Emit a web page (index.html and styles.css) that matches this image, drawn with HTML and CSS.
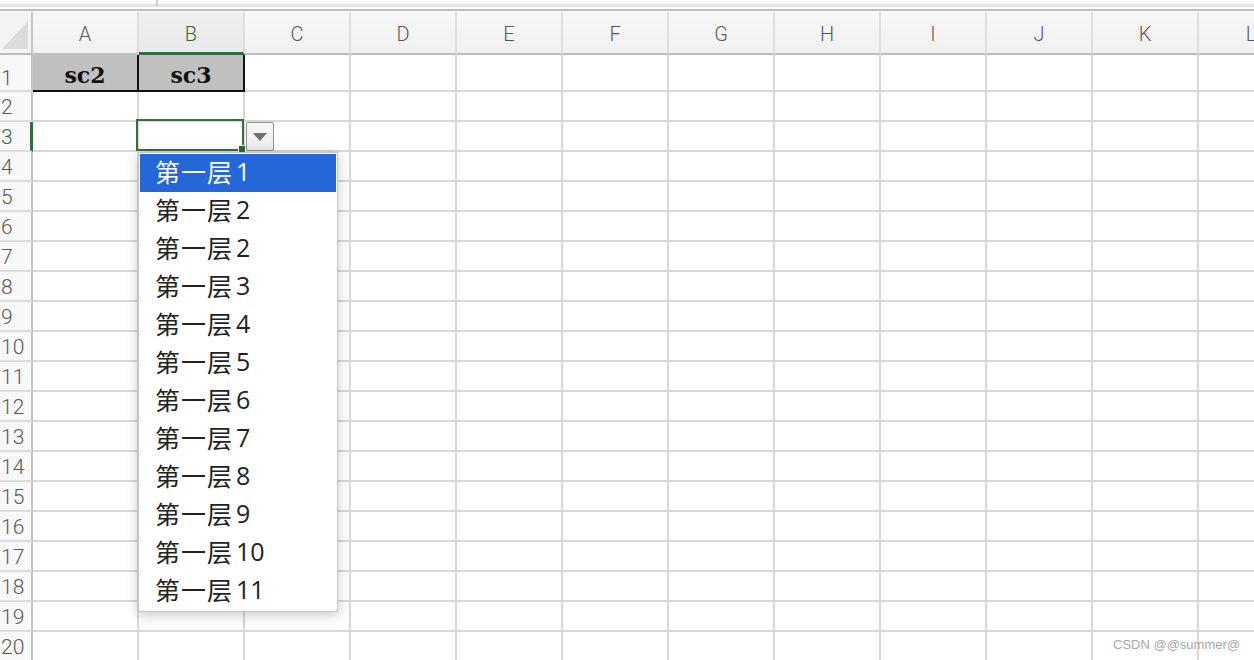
FILE: index.html
```html
<!DOCTYPE html>
<html>
<head>
<meta charset="utf-8">
<link rel="stylesheet" href="styles.css">
</head>
<body>
<div class="topbar"><span class="tick"></span></div>
<div class="sheet">
  <div class="row hdr">
    <div class="corner"><svg width="32" height="41" viewBox="0 0 32 41"><polygon points="2,37 28,9 28,37" fill="#dcdcdc"/></svg></div>
    <div class="ch">A</div><div class="ch sel">B</div><div class="ch">C</div><div class="ch">D</div><div class="ch">E</div><div class="ch">F</div><div class="ch">G</div><div class="ch">H</div><div class="ch">I</div><div class="ch">J</div><div class="ch">K</div><div class="ch">L</div>
  </div>
  <div class="row r1">
    <div class="rh">1</div>
    <div class="c hd">sc2</div><div class="c hd">sc3</div><div class="c"></div><div class="c"></div><div class="c"></div><div class="c"></div><div class="c"></div><div class="c"></div><div class="c"></div><div class="c"></div><div class="c"></div><div class="c"></div>
  </div>
  <div class="row"><div class="rh">2</div><div class="c"></div><div class="c"></div><div class="c"></div><div class="c"></div><div class="c"></div><div class="c"></div><div class="c"></div><div class="c"></div><div class="c"></div><div class="c"></div><div class="c"></div><div class="c"></div></div>
  <div class="row"><div class="rh act">3</div><div class="c"></div><div class="c active"><span class="ddbtn"><svg width="14" height="8" viewBox="0 0 14 8"><polygon points="0,0 14,0 7,8" fill="#6f6f6f"/></svg></span></div><div class="c"></div><div class="c"></div><div class="c"></div><div class="c"></div><div class="c"></div><div class="c"></div><div class="c"></div><div class="c"></div><div class="c"></div><div class="c"></div></div>
  <div class="row"><div class="rh">4</div><div class="c"></div><div class="c"></div><div class="c"></div><div class="c"></div><div class="c"></div><div class="c"></div><div class="c"></div><div class="c"></div><div class="c"></div><div class="c"></div><div class="c"></div><div class="c"></div></div>
  <div class="row"><div class="rh">5</div><div class="c"></div><div class="c"></div><div class="c"></div><div class="c"></div><div class="c"></div><div class="c"></div><div class="c"></div><div class="c"></div><div class="c"></div><div class="c"></div><div class="c"></div><div class="c"></div></div>
  <div class="row"><div class="rh">6</div><div class="c"></div><div class="c"></div><div class="c"></div><div class="c"></div><div class="c"></div><div class="c"></div><div class="c"></div><div class="c"></div><div class="c"></div><div class="c"></div><div class="c"></div><div class="c"></div></div>
  <div class="row"><div class="rh">7</div><div class="c"></div><div class="c"></div><div class="c"></div><div class="c"></div><div class="c"></div><div class="c"></div><div class="c"></div><div class="c"></div><div class="c"></div><div class="c"></div><div class="c"></div><div class="c"></div></div>
  <div class="row"><div class="rh">8</div><div class="c"></div><div class="c"></div><div class="c"></div><div class="c"></div><div class="c"></div><div class="c"></div><div class="c"></div><div class="c"></div><div class="c"></div><div class="c"></div><div class="c"></div><div class="c"></div></div>
  <div class="row"><div class="rh">9</div><div class="c"></div><div class="c"></div><div class="c"></div><div class="c"></div><div class="c"></div><div class="c"></div><div class="c"></div><div class="c"></div><div class="c"></div><div class="c"></div><div class="c"></div><div class="c"></div></div>
  <div class="row"><div class="rh">10</div><div class="c"></div><div class="c"></div><div class="c"></div><div class="c"></div><div class="c"></div><div class="c"></div><div class="c"></div><div class="c"></div><div class="c"></div><div class="c"></div><div class="c"></div><div class="c"></div></div>
  <div class="row"><div class="rh">11</div><div class="c"></div><div class="c"></div><div class="c"></div><div class="c"></div><div class="c"></div><div class="c"></div><div class="c"></div><div class="c"></div><div class="c"></div><div class="c"></div><div class="c"></div><div class="c"></div></div>
  <div class="row"><div class="rh">12</div><div class="c"></div><div class="c"></div><div class="c"></div><div class="c"></div><div class="c"></div><div class="c"></div><div class="c"></div><div class="c"></div><div class="c"></div><div class="c"></div><div class="c"></div><div class="c"></div></div>
  <div class="row"><div class="rh">13</div><div class="c"></div><div class="c"></div><div class="c"></div><div class="c"></div><div class="c"></div><div class="c"></div><div class="c"></div><div class="c"></div><div class="c"></div><div class="c"></div><div class="c"></div><div class="c"></div></div>
  <div class="row"><div class="rh">14</div><div class="c"></div><div class="c"></div><div class="c"></div><div class="c"></div><div class="c"></div><div class="c"></div><div class="c"></div><div class="c"></div><div class="c"></div><div class="c"></div><div class="c"></div><div class="c"></div></div>
  <div class="row"><div class="rh">15</div><div class="c"></div><div class="c"></div><div class="c"></div><div class="c"></div><div class="c"></div><div class="c"></div><div class="c"></div><div class="c"></div><div class="c"></div><div class="c"></div><div class="c"></div><div class="c"></div></div>
  <div class="row"><div class="rh">16</div><div class="c"></div><div class="c"></div><div class="c"></div><div class="c"></div><div class="c"></div><div class="c"></div><div class="c"></div><div class="c"></div><div class="c"></div><div class="c"></div><div class="c"></div><div class="c"></div></div>
  <div class="row"><div class="rh">17</div><div class="c"></div><div class="c"></div><div class="c"></div><div class="c"></div><div class="c"></div><div class="c"></div><div class="c"></div><div class="c"></div><div class="c"></div><div class="c"></div><div class="c"></div><div class="c"></div></div>
  <div class="row"><div class="rh">18</div><div class="c"></div><div class="c"></div><div class="c"></div><div class="c"></div><div class="c"></div><div class="c"></div><div class="c"></div><div class="c"></div><div class="c"></div><div class="c"></div><div class="c"></div><div class="c"></div></div>
  <div class="row"><div class="rh">19</div><div class="c"></div><div class="c"></div><div class="c"></div><div class="c"></div><div class="c"></div><div class="c"></div><div class="c"></div><div class="c"></div><div class="c"></div><div class="c"></div><div class="c"></div><div class="c"></div></div>
  <div class="row"><div class="rh">20</div><div class="c"></div><div class="c"></div><div class="c"></div><div class="c"></div><div class="c"></div><div class="c"></div><div class="c"></div><div class="c"></div><div class="c"></div><div class="c"></div><div class="c"></div><div class="c"></div></div>
</div>

<ul class="popup">
  <li class="on">第一层<span class="n">1</span></li>
  <li>第一层<span class="n">2</span></li>
  <li>第一层<span class="n">2</span></li>
  <li>第一层<span class="n">3</span></li>
  <li>第一层<span class="n">4</span></li>
  <li>第一层<span class="n">5</span></li>
  <li>第一层<span class="n">6</span></li>
  <li>第一层<span class="n">7</span></li>
  <li>第一层<span class="n">8</span></li>
  <li>第一层<span class="n">9</span></li>
  <li>第一层<span class="n">10</span></li>
  <li>第一层<span class="n">11</span></li>
</ul>

<div class="watermark">CSDN @@summer@</div>
</body>
</html>
```

FILE: styles.css
```css
html, body {
  margin: 0;
  padding: 0;
  background: #ffffff;
  overflow: hidden;
  width: 1254px;
  height: 660px;
}

body {
  position: relative;
  font-family: Roboto, "Noto Sans", "Liberation Sans", sans-serif;
}

.topbar {
  height: 12px;
  box-sizing: border-box;
  background: #ffffff;
  position: relative;
  border-top: 4px solid #ffffff;
}
.topbar::before {
  content: "";
  display: block;
  height: 3px;
  background: #e4e4e4;
}
.topbar::after {
  content: "";
  display: block;
  margin-top: 2px;
  height: 2px;
  background: #bdbdbd;
}
.tick {
  position: absolute;
  left: 156px;
  top: -4px;
  width: 2px;
  height: 6px;
  background: #cfcfcf;
}

.sheet {
  display: flex;
  flex-direction: column;
  width: 1305px;
}

.row {
  display: flex;
  height: 30px;
  flex: 0 0 auto;
}
.row.hdr { height: 43px; }
.row.r1 { height: 37px; }

.corner {
  width: 33px;
  flex: 0 0 33px;
  box-sizing: border-box;
  border-right: 2px solid #c4c4c4;
  border-bottom: 2px solid #bdbdbd;
  background: #f4f4f4;
  overflow: hidden;
}
.corner svg { display: block; }

.ch {
  width: 106px;
  flex: 0 0 106px;
  box-sizing: border-box;
  border-right: 2px solid #dedede;
  border-bottom: 2px solid #bdbdbd;
  background: linear-gradient(#f7f7f7, #f1f1f1);
  color: #595959;
  font-size: 20px;
  font-weight: 300;
  display: flex;
  align-items: center;
  justify-content: center;
  padding-top: 3px;
}
.ch.sel {
  background: linear-gradient(#efefef, #e9e9e9);
  color: #2e6e3f;
  border-bottom: 3px solid #2e6e3f;
  padding-top: 4px;
}

.rh {
  width: 33px;
  flex: 0 0 33px;
  box-sizing: border-box;
  border-right: 2px solid #c4c4c4;
  border-bottom: 2px solid #dcdcdc;
  background: #f8f8f8;
  color: #595959;
  font-size: 21px;
  font-weight: 300;
  line-height: 1;
  display: flex;
  align-items: flex-end;
  padding: 0 0 2px 1px;
}
.r1 .rh { padding-bottom: 1px; }
.rh.act {
  color: #2e6e3f;
  border-right: 3px solid #2e6e3f;
}

.c {
  width: 106px;
  flex: 0 0 106px;
  box-sizing: border-box;
  border-right: 2px solid #d8d8d8;
  border-bottom: 2px solid #d8d8d8;
  position: relative;
}

.c.hd {
  background: #c0c0c0;
  border-right: 2px solid #111111;
  border-bottom: 2px solid #111111;
  font-family: "DejaVu Serif", "Liberation Serif", serif;
  font-weight: bold;
  font-size: 22px;
  color: #111111;
  display: flex;
  align-items: flex-end;
  justify-content: center;
  padding-bottom: 2px;
}

.c.active::after {
  content: "";
  position: absolute;
  left: -3px;
  top: -3px;
  right: -1px;
  bottom: -1px;
  border: 2px solid #36703f;
}
.c.active::before {
  content: "";
  position: absolute;
  right: -3px;
  bottom: -3px;
  width: 6px;
  height: 6px;
  background: #2f6a3a;
  border: 1px solid #ffffff;
  z-index: 2;
}

.ddbtn {
  position: absolute;
  left: 107px;
  top: 0;
  width: 28px;
  height: 29px;
  box-sizing: border-box;
  border: 1px solid #8f8f8f;
  border-radius: 2px;
  background: linear-gradient(#f8f8f8, #ececec);
  display: flex;
  align-items: center;
  justify-content: center;
  z-index: 3;
}
.ddbtn svg { display: block; margin-top: 1px; }

.popup {
  position: absolute;
  left: 138px;
  top: 152px;
  width: 200px;
  height: 460px;
  box-sizing: border-box;
  margin: 0;
  padding: 1px;
  list-style: none;
  background: #ffffff;
  border: 1px solid #c6c6c6;
  box-shadow: 0 3px 12px rgba(0, 0, 0, 0.22);
  z-index: 5;
}
.popup li {
  height: 38px;
  box-sizing: border-box;
  padding: 0 0 5px 15px;
  display: flex;
  align-items: center;
  font-family: "Noto Sans CJK SC", "Noto Sans", sans-serif;
  font-size: 25px;
  letter-spacing: 1px;
  color: #222222;
}
.popup li .n {
  font-family: "Open Sans", "Noto Sans", sans-serif;
  font-size: 25px;
  letter-spacing: 0;
  margin-left: 3px;
}
.popup li.on {
  background: #2467d9;
  color: #ffffff;
}

.watermark {
  position: absolute;
  right: 14px;
  bottom: 8px;
  font-family: "Liberation Sans", Arial, sans-serif;
  font-size: 13px;
  color: #a8a8a8;
}
```
